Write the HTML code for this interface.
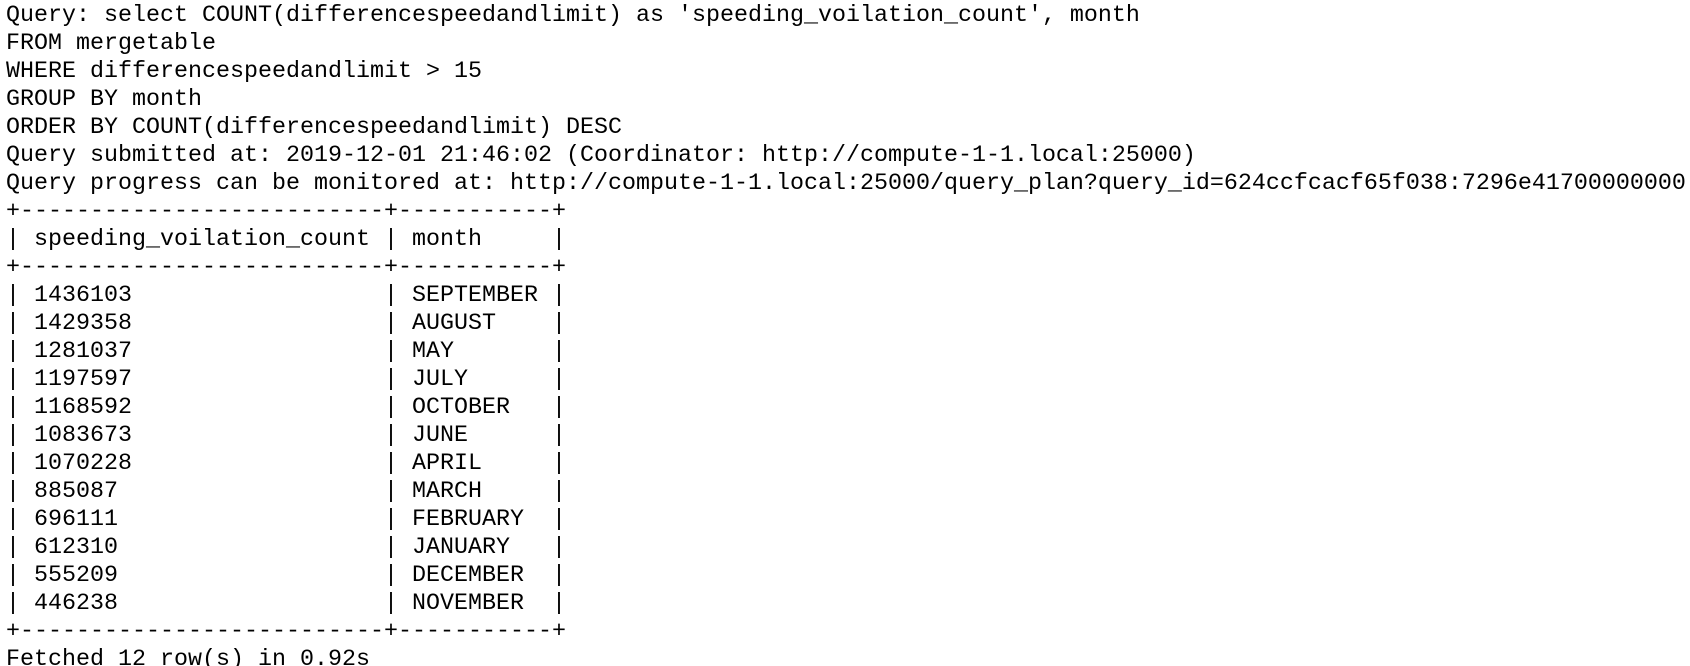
<!DOCTYPE html>
<html><head><meta charset="utf-8"><style>
html,body{margin:0;padding:0;background:#fff;width:1690px;height:666px;overflow:hidden}
pre{margin:0;padding:2px 0 0 6px;font-family:"Liberation Mono",monospace;font-size:23.33px;line-height:28px;color:#000;white-space:pre}
</style></head><body><pre>Query: select COUNT(differencespeedandlimit) as 'speeding_voilation_count', month
FROM mergetable
WHERE differencespeedandlimit &gt; 15
GROUP BY month
ORDER BY COUNT(differencespeedandlimit) DESC
Query submitted at: 2019-12-01 21:46:02 (Coordinator: http://compute-1-1.local:25000)
Query progress can be monitored at: http://compute-1-1.local:25000/query_plan?query_id=624ccfcacf65f038:7296e41700000000
+--------------------------+-----------+
| speeding_voilation_count | month     |
+--------------------------+-----------+
| 1436103                  | SEPTEMBER |
| 1429358                  | AUGUST    |
| 1281037                  | MAY       |
| 1197597                  | JULY      |
| 1168592                  | OCTOBER   |
| 1083673                  | JUNE      |
| 1070228                  | APRIL     |
| 885087                   | MARCH     |
| 696111                   | FEBRUARY  |
| 612310                   | JANUARY   |
| 555209                   | DECEMBER  |
| 446238                   | NOVEMBER  |
+--------------------------+-----------+
Fetched 12 row(s) in 0.92s</pre></body></html>
